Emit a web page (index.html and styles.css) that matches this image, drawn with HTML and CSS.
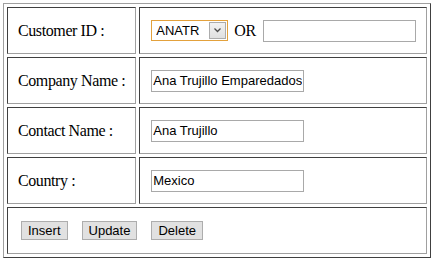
FILE: index.html
```html
<!DOCTYPE html>
<html lang="en">
<head>
    <meta charset="UTF-8">
    <title>Customers</title>
    <link rel="stylesheet" href="styles.css">
</head>
<body>
    <table class="editor">
        <tr>
            <td class="label">Customer ID :</td>
            <td class="field">
                <div class="line">
                    <span class="combo">
                        <select id="customerId">
                            <option>ANATR</option>
                            <option>ALFKI</option>
                            <option>ANTON</option>
                        </select>
                        <span class="comboArrow">
                            <svg width="7" height="5" viewBox="0 0 7 5"><path d="M0.5 0.5 L3.5 3.5 L6.5 0.5" fill="none" stroke="#4d4d4d" stroke-width="1.3"/></svg>
                        </span>
                    </span>
                    <span class="or">OR</span>
                    <input type="text" class="box" id="search">
                </div>
            </td>
        </tr>
        <tr>
            <td class="label">Company Name :</td>
            <td class="field"><input type="text" class="box" value="Ana Trujillo Emparedados"></td>
        </tr>
        <tr>
            <td class="label">Contact Name :</td>
            <td class="field"><input type="text" class="box" value="Ana Trujillo"></td>
        </tr>
        <tr>
            <td class="label">Country :</td>
            <td class="field"><input type="text" class="box" value="Mexico"></td>
        </tr>
        <tr>
            <td colspan="2" class="actions">
                <div class="buttons">
                    <button type="button">Insert</button>
                    <button type="button">Update</button>
                    <button type="button">Delete</button>
                </div>
            </td>
        </tr>
    </table>
</body>
</html>
```

FILE: styles.css
```css
body{
    margin: 3px;
    font-family: "Liberation Serif", "Times New Roman", Times, serif;
    font-size: 16px;
    color: black;
}

.editor{
    box-sizing: border-box;
    width: 428px;
    border-collapse: separate;
    border-spacing: 3px;
    border: 1px solid;
    border-color: #a0a0a0 #404040 #404040 #a0a0a0;
}

.editor td{
    box-sizing: border-box;
    height: 47px;
    padding: 0 10px;
    border: 1px solid;
    border-color: #404040 #a0a0a0 #a0a0a0 #404040;
    vertical-align: middle;
}

.label{
    width: 129px;
    white-space: nowrap;
    letter-spacing: -0.4px;
}

.editor td.field{
    padding-left: 11px;
}

.line{
    display: flex;
    align-items: center;
}

.combo{
    position: relative;
    display: inline-block;
    width: 77px;
    height: 21px;
}

.combo select{
    appearance: none;
    -webkit-appearance: none;
    box-sizing: border-box;
    width: 100%;
    height: 100%;
    margin: 0;
    padding: 0 0 0 4px;
    border: 1px solid #e3a13c;
    border-radius: 0;
    background: white;
    font-family: "Liberation Sans", Arial, sans-serif;
    font-size: 13px;
    color: black;
}

.comboArrow{
    position: absolute;
    top: 2px;
    right: 2px;
    width: 17px;
    height: 17px;
    box-sizing: border-box;
    border: 1px solid #acacac;
    background: linear-gradient(#f2f2f2, #e0e0e0);
    display: flex;
    align-items: center;
    justify-content: center;
}

.or{
    margin: 0 7px 0 6px;
    letter-spacing: -0.4px;
}

.box{
    box-sizing: border-box;
    width: 153px;
    height: 22px;
    margin: 0;
    padding: 0 1px;
    border: 1px solid #a9a9a9;
    font-family: "Liberation Sans", Arial, sans-serif;
    font-size: 13px;
    color: black;
}

.editor td.actions{
    padding-left: 13px;
}

.buttons{
    display: flex;
    align-items: center;
    gap: 14px;
}

button{
    box-sizing: border-box;
    height: 19px;
    margin: 0;
    padding: 0 6px;
    border: 1px solid #adadad;
    border-radius: 0;
    background-color: #e1e1e1;
    font-family: "Liberation Sans", Arial, sans-serif;
    font-size: 13px;
    color: black;
}
```
